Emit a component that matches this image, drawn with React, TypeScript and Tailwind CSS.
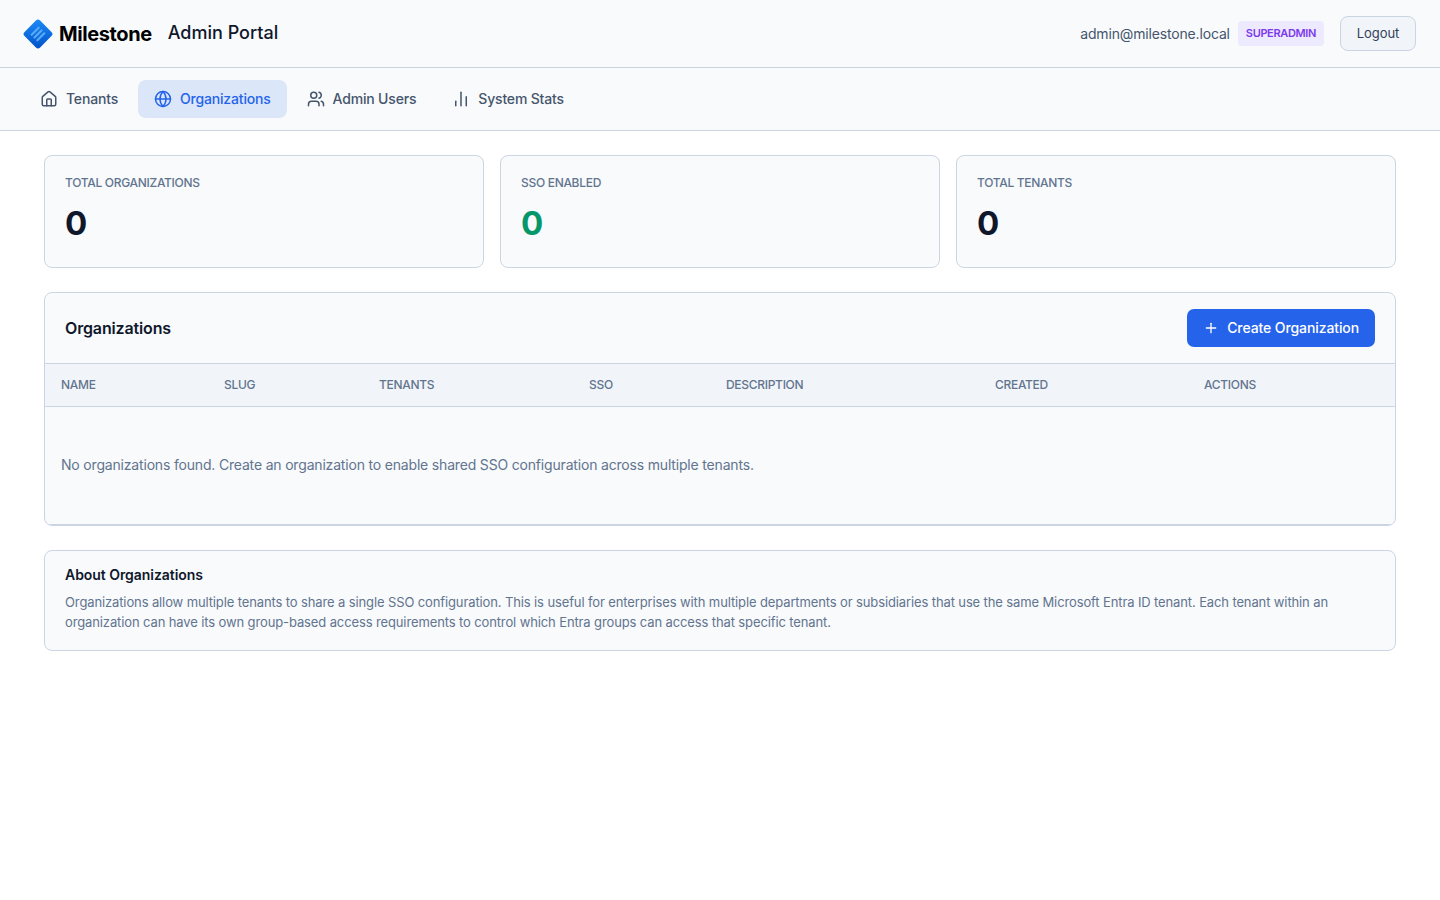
import { BarChart2, Globe, House, Plus, Users } from 'lucide-react';

const sans = "font-['Inter',sans-serif]";

const navItems = [
  { label: 'Tenants', icon: House },
  { label: 'Organizations', icon: Globe, active: true },
  { label: 'Admin Users', icon: Users },
  { label: 'System Stats', icon: BarChart2 },
];

const stats = [
  { label: 'TOTAL ORGANIZATIONS', color: 'text-slate-900' },
  { label: 'SSO ENABLED', color: 'text-[#059669]' },
  { label: 'TOTAL TENANTS', color: 'text-slate-900' },
];

const columns = [
  { label: 'NAME', width: 'w-[163px]' },
  { label: 'SLUG', width: 'w-[155px]' },
  { label: 'TENANTS', width: 'w-[210px]' },
  { label: 'SSO', width: 'w-[137px]' },
  { label: 'DESCRIPTION', width: 'w-[269px]' },
  { label: 'CREATED', width: 'w-[209px]' },
  { label: 'ACTIONS', width: 'w-[207px]' },
];

function Logo() {
  return (
    <svg width="30" height="30" viewBox="0 0 30 30" fill="none" className="-ml-px">
      <defs>
        <linearGradient id="logo-fill" x1="4" y1="4" x2="26" y2="26" gradientUnits="userSpaceOnUse">
          <stop stopColor="#1d8cf8" />
          <stop offset="1" stopColor="#0051c7" />
        </linearGradient>
      </defs>
      <rect x="4" y="4" width="22" height="22" rx="3" transform="rotate(45 15 15)" fill="url(#logo-fill)" />
      <path
        d="M8.7 15.7 15.7 8.7M11.5 18.5 18.5 11.5M14.3 21.3 21.3 14.3"
        stroke="#5aa9f5"
        strokeWidth="2.2"
        strokeLinecap="round"
      />
    </svg>
  );
}

export default function App() {
  return (
    <div className={`min-h-[900px] bg-white ${sans}`}>
      <header className="flex h-[68px] items-center justify-between border-b border-[#cbd5e1] bg-[#f8fafc] px-6">
        <div className="flex items-center">
          <Logo />
          <span className="ml-[6px] text-[20px] font-bold tracking-[-0.4px] text-black">Milestone</span>
          <span className="ml-4 -mt-px text-lg font-medium text-slate-900">Admin Portal</span>
        </div>
        <div className="flex items-center">
          <span className="text-sm tracking-[-0.16px] text-slate-600">admin@milestone.local</span>
          <span className="ml-2 rounded bg-[#ede9fe] px-2 py-1 text-[11px] font-semibold tracking-[-0.35px] text-[#7c3aed] leading-[17px]">
            SUPERADMIN
          </span>
          <button className="ml-4 h-[35px] w-[76px] rounded-lg border border-[#cbd5e1] bg-[#f1f5f9] text-[13px] font-normal tracking-[-0.05px] text-slate-700">
            Logout
          </button>
        </div>
      </header>

      <nav className="flex h-[63px] items-center gap-1 border-b border-[#cbd5e1] bg-[#f8fafc] px-6">
        {navItems.map(({ label, icon: Icon, active }) => (
          <a
            key={label}
            className={`flex h-[38px] items-center gap-2 rounded-lg px-4 text-sm font-medium tracking-[-0.18px] ${
              active ? 'bg-[#dbe6f9] text-[#2563eb]' : 'text-slate-600'
            }`}
          >
            <Icon size={18} strokeWidth={2} />
            {label}
          </a>
        ))}
      </nav>

      <main className="px-11 pt-6">
        <div className="grid grid-cols-3 gap-4">
          {stats.map((s) => (
            <div key={s.label} className="h-[113px] rounded-lg border border-[#cbd5e1] bg-[#f8fafc] px-5 pt-[19px]">
              <div className="text-xs font-medium tracking-[-0.3px] text-slate-500">{s.label}</div>
              <div className={`mt-2 text-[33px] font-bold leading-[48px] ${s.color}`}>0</div>
            </div>
          ))}
        </div>

        <section className="mt-6 overflow-hidden rounded-lg border border-[#cbd5e1] bg-[#f8fafc]">
          <div className="flex h-[71px] items-center justify-between border-b border-[#cbd5e1] px-5">
            <h2 className="text-base font-semibold tracking-[-0.15px] text-slate-900">Organizations</h2>
            <button className="flex h-[38px] items-center gap-2 rounded-[7px] bg-[#2563eb] px-4 text-sm font-medium tracking-[-0.1px] text-white">
              <Plus size={16} />
              Create Organization
            </button>
          </div>
          <table className="w-full table-fixed">
            <thead>
              <tr className="border-b border-[#cbd5e1] bg-[#f1f5f9]">
                {columns.map((c) => (
                  <th
                    key={c.label}
                    className={`h-[42px] px-4 text-left text-xs font-medium tracking-[-0.3px] text-slate-500 ${c.width}`}
                  >
                    {c.label}
                  </th>
                ))}
              </tr>
            </thead>
            <tbody>
              <tr className="border-b border-[#cbd5e1]">
                <td colSpan={7} className="px-4 pt-12 pb-[49px] text-sm tracking-[-0.18px] text-slate-500">
                  No organizations found. Create an organization to enable shared SSO configuration across multiple tenants.
                </td>
              </tr>
            </tbody>
          </table>
        </section>

        <section className="mt-6 h-[101px] rounded-lg border border-[#cbd5e1] bg-[#f8fafc] px-5 pt-[14px]">
          <h3 className="text-sm font-semibold leading-5 tracking-[-0.05px] text-slate-900">About Organizations</h3>
          <p className="mt-[7px] text-[13px] leading-5 tracking-[-0.12px] text-slate-500">
            Organizations allow multiple tenants to share a single SSO configuration. This is useful for enterprises with
            multiple departments or subsidiaries that use the same Microsoft Entra ID tenant. Each tenant within an
            organization can have its own group-based access requirements to control which Entra groups can access that
            specific tenant.
          </p>
        </section>
      </main>
    </div>
  );
}
